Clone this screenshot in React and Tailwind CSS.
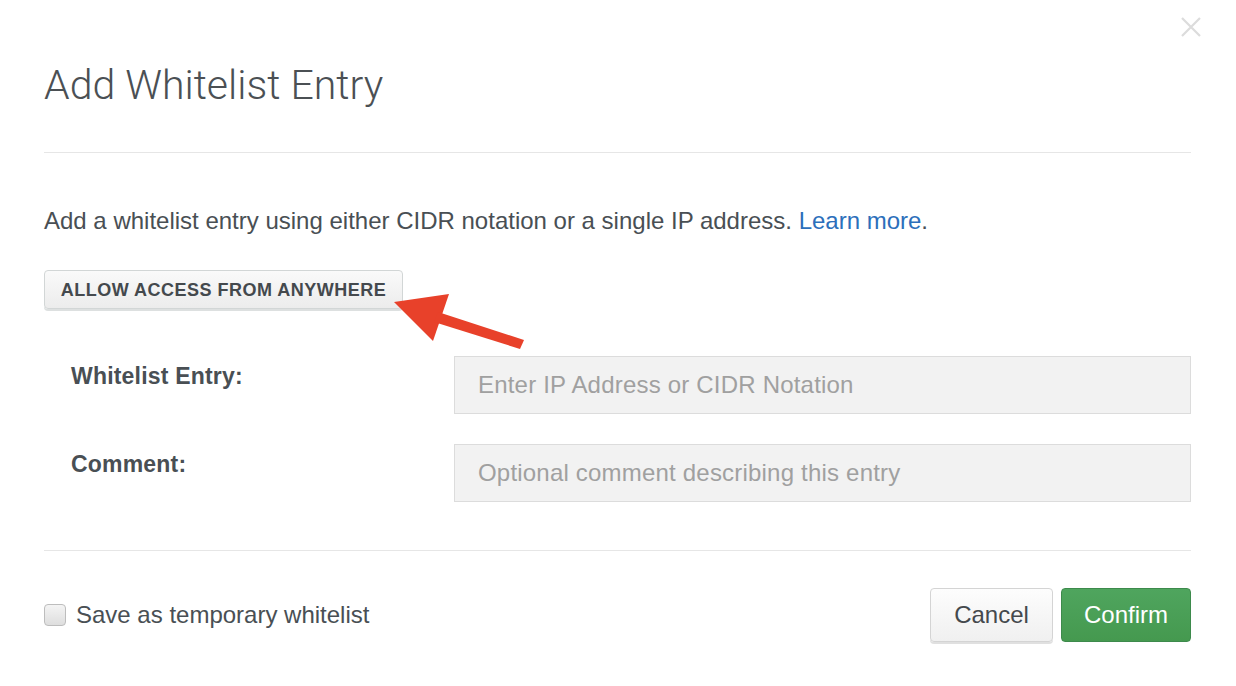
export default function App() {
  return (
    <div
      className="relative min-h-[686px] w-[1236px] bg-white pl-[44px] pr-[45px] text-[#494f54]"
      style={{ fontFamily: '"Liberation Sans", Arial, sans-serif' }}
    >
      <button className="absolute right-[34px] top-[16px] text-[#dcdcdc]" aria-label="close">
        <svg width="22" height="22" viewBox="0 0 22 22" stroke="currentColor" strokeWidth="2.2">
          <path d="M2 2 L20 20 M20 2 L2 20" />
        </svg>
      </button>

      <div className="border-b border-[#e6e6e6] pb-[42px] pt-[60px]">
        <h1 className="text-[41px] font-light leading-[50px] text-[#4b5054]" style={{ fontFamily: 'Roboto, "Liberation Sans", sans-serif' }}>
          Add Whitelist Entry
        </h1>
      </div>

      <p className="mt-[53px] text-[24px] leading-[30px]">
        Add a whitelist entry using either CIDR notation or a single IP address.{" "}
        <a className="text-[#2c6fbb]" href="#">Learn more</a>.
      </p>

      <div className="relative mt-[34px]">
        <button className="h-[39px] w-[359px] rounded-[4px] border border-[#d2d6d6] bg-gradient-to-b from-[#fafafa] to-[#ececec] pt-[2px] text-[18px] font-bold tracking-[0.5px] text-[#44494d] shadow-[0_2px_0_#dde0e0]">
          ALLOW ACCESS FROM ANYWHERE
        </button>
        <svg className="absolute left-[302px] top-[22px]" width="185" height="80" viewBox="346 292 185 80">
          <polygon points="394,302 449,294 433,341" fill="#e8412a" />
          <polygon points="438,312 524,340 520,349 434,322" fill="#e8412a" />
        </svg>
      </div>

      <div className="mt-[47px] flex flex-col gap-[30px]">
        <div className="flex items-start">
          <label className="w-[410px] pl-[27px] text-[23px] font-bold leading-[40px] tracking-[0.2px]">Whitelist Entry:</label>
          <input
            className="h-[58px] flex-1 border border-[#dcdcdc] bg-[#f2f2f2] px-[23px] text-[24px] tracking-[0.2px] placeholder:text-[#a0a0a0] outline-none"
            placeholder="Enter IP Address or CIDR Notation"
          />
        </div>
        <div className="flex items-start">
          <label className="w-[410px] pl-[27px] text-[23px] font-bold leading-[40px] tracking-[0.2px]">Comment:</label>
          <input
            className="h-[58px] flex-1 border border-[#dcdcdc] bg-[#f2f2f2] px-[23px] text-[24px] tracking-[0.2px] placeholder:text-[#a0a0a0] outline-none"
            placeholder="Optional comment describing this entry"
          />
        </div>
      </div>

      <div className="mt-[48px] flex items-center justify-between border-t border-[#e6e6e6] pt-[37px]">
        <label className="flex items-center gap-[10px] text-[24px]">
          <span className="h-[22px] w-[22px] rounded-[4px] border border-[#bdbdbd] bg-gradient-to-b from-[#f4f4f4] to-[#dedede]" />
          Save as temporary whitelist
        </label>
        <div className="flex gap-[8px]">
          <button className="h-[54px] w-[123px] rounded-[4px] border border-[#d4d4d4] bg-gradient-to-b from-[#fdfdfd] to-[#f0f0f0] text-[24px] text-[#44494d] shadow-[0_2px_0_#e0e0e0]">
            Cancel
          </button>
          <button className="h-[54px] w-[130px] rounded-[4px] border border-[#3d8a4c] bg-gradient-to-b from-[#4fa55e] to-[#45994f] text-[24px] text-white">
            Confirm
          </button>
        </div>
      </div>
    </div>
  );
}
